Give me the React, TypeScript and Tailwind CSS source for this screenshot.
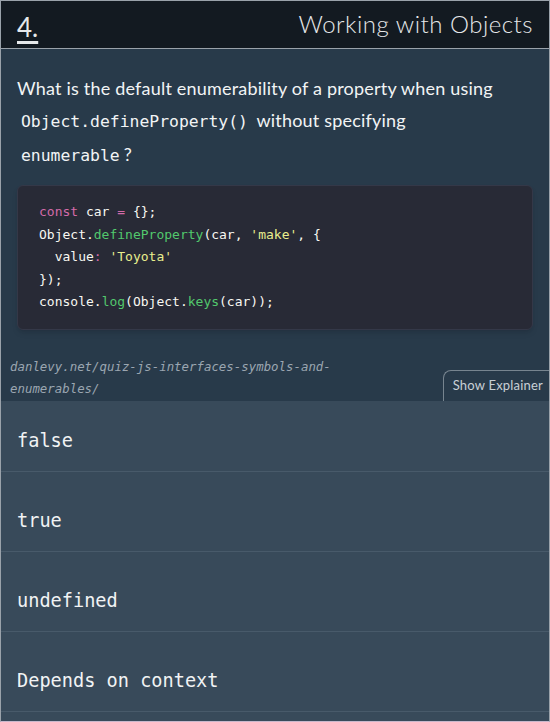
const mono = "font-['DejaVu_Sans_Mono','Liberation_Mono',monospace]";

const options = ["false", "true", "undefined", "Depends on context"];

const App = () => {
  return (
    <div className="w-[550px] h-[722px] overflow-hidden border border-[#9aa2aa] border-b-[#c9b8cc] bg-[#283a4a] flex flex-col">
      <div className="h-[48px] shrink-0 bg-[#131a21] border-b border-[#9aa2aa] flex items-end justify-between px-4 pb-[8px] font-['Lato',sans-serif] text-[#e6e8ea]">
        <span className="text-[26px] leading-none underline underline-offset-[4px] decoration-[3px]">4.</span>
        <span className="text-[24px] font-light leading-none mb-[4px] tracking-[0.5px]">Working with Objects</span>
      </div>

      <div className="flex-1 flex flex-col">
        <p className="pl-4 pr-[36px] pt-[23px] text-[18px] leading-[32px] text-[#f2f4f5] font-['Lato',sans-serif] tracking-[0.2px]">
          What is the default enumerability of a property when using{" "}
          <code className={`${mono} text-[16.4px] px-1 tracking-normal`}>Object.defineProperty()</code> without specifying{" "}
          <code className={`${mono} text-[16.4px] px-1 tracking-normal`}>enumerable</code>?
        </p>

        <pre
          className={`${mono} mx-4 mt-[13px] rounded-md bg-[#282a36] border border-[#343848] shadow-md px-[21px] py-[15px] text-[13px] leading-[22.5px] text-[#f8f8f2]`}
        >
          <span className="text-[#d36aa9]">const</span> car <span className="text-[#d36aa9]">=</span> {"{};"}
          {"\n"}Object.<span className="text-[#52c86d]">defineProperty</span>(car, <span className="text-[#e8ee8e]">'make'</span>, {"{"}
          {"\n"}  value<span className="text-[#d36aa9]">:</span> <span className="text-[#e8ee8e]">'Toyota'</span>
          {"\n"}{"});"}
          {"\n"}console.<span className="text-[#52c86d]">log</span>(Object.<span className="text-[#52c86d]">keys</span>(car));
        </pre>

        <div className="mt-auto flex items-end justify-between">
          <p className={`${mono} italic text-[12.4px] leading-[22px] text-[#9ba6b1] pl-[9px] pb-[1px]`}>
            danlevy.net/quiz-js-interfaces-symbols-and-
            <br />
            enumerables/
          </p>
          <button className="h-[31px] pl-[9px] pr-[6px] border border-b-0 border-r-0 border-[#77848f] rounded-tl-lg text-[13px] tracking-[0.2px] text-[#c9d0d6] font-['Lato',sans-serif] bg-[#283a4a]">
            Show Explainer
          </button>
        </div>
      </div>

      <div className="bg-[#384a5a] shrink-0">
        {options.map((o) => (
          <div
            key={o}
            className={`${mono} h-[80px] pt-[18px] first:h-[71px] first:pt-[9px] border-b border-[#485a6a] flex items-center px-4 text-[18.6px] text-[#f1f3f4]`}
          >
            {o}
          </div>
        ))}
        <div className="h-[9px]" />
      </div>
    </div>
  );
};

export default App;
